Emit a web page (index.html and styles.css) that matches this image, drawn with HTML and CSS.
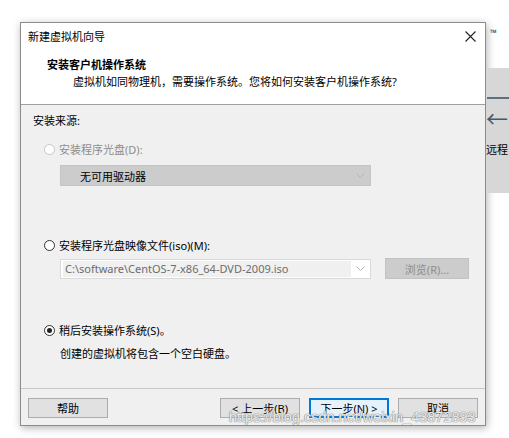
FILE: index.html
```html
<!DOCTYPE html>
<html lang="zh-CN">
<head>
   <meta charset="UTF-8">
   <title>新建虚拟机向导</title>
   <link rel="stylesheet" href="styles.css">
</head>
<body>
   <div class="desk">

      <div class="dialog">
         <div class="head">
            <div class="titlebar">
               <span>新建虚拟机向导</span>
               <svg class="close" width="11" height="11" viewBox="0 0 11 11">
                  <path d="M0.5 0.5 L10.5 10.5 M10.5 0.5 L0.5 10.5" stroke="#222" stroke-width="1.1" fill="none"/>
               </svg>
            </div>
            <p class="head-title">安装客户机操作系统</p>
            <p class="head-sub">虚拟机如同物理机，需要操作系统。您将如何安装客户机操作系统?</p>
         </div>

         <div class="body">
            <p class="label">安装来源:</p>

            <div class="radio-row disabled row-1">
               <span class="radio"></span>
               <span>安装程序光盘(D):</span>
            </div>
            <div class="combo combo-off">
               <span class="combo-text">无可用驱动器</span>
               <svg class="chev" width="9" height="5" viewBox="0 0 9 5"><path d="M0.5 0.5 L4.5 4.5 L8.5 0.5" stroke="#b4b4b4" fill="none"/></svg>
            </div>

            <div class="radio-row row-2">
               <span class="radio"></span>
               <span>安装程序光盘映像文件(iso)(M):</span>
            </div>
            <div class="iso-row">
               <div class="combo combo-iso">
                  <span class="combo-text">C:\software\CentOS-7-x86_64-DVD-2009.iso</span>
                  <svg class="chev" width="9" height="5" viewBox="0 0 9 5"><path d="M0.5 0.5 L4.5 4.5 L8.5 0.5" stroke="#b4b4b4" fill="none"/></svg>
               </div>
               <button class="browse">浏览(R)...</button>
            </div>

            <div class="radio-row row-3">
               <span class="radio checked"></span>
               <span>稍后安装操作系统(S)。</span>
            </div>
            <p class="desc">创建的虚拟机将包含一个空白硬盘。</p>
         </div>

         <div class="foot">
            <button class="btn">帮助</button>
            <div class="foot-right">
               <button class="btn">&lt; 上一步(B)</button>
               <button class="btn btn-main">下一步(N) &gt;</button>
               <button class="btn">取消</button>
            </div>
         </div>
      </div>

      <div class="app">
         <div class="app-top"><span class="tm">™</span></div>
         <div class="app-panel">
            <div class="app-line"></div>
            <div class="app-arrow">←</div>
            <div class="app-text">远程</div>
         </div>
      </div>

      <div class="watermark">https://blog.csdn.net/weixin_43872893</div>
   </div>
</body>
</html>
```

FILE: styles.css
```css
body{
   margin: 0;
   background-color: white;
   font-family: "Noto Sans", "Noto Sans CJK SC", sans-serif;
   font-size: 11px;
   color: #000;
}
p{
   margin: 0;
}

.desk{
   position: relative;
   display: flex;
   width: 509px;
   height: 438px;
   overflow: hidden;
}

.dialog{
   margin-left: 20px;
   margin-top: 22px;
   width: 466px;
   height: 404px;
   box-sizing: border-box;
   border: 1px solid #8c8c8c;
   background-color: #f0f0f0;
   box-shadow: 1px 2px 8px rgba(0, 0, 0, 0.3);
   display: flex;
   flex-direction: column;
   flex-shrink: 0;
}

/* white top part */
.head{
   background-color: white;
   height: 81px;
   border-bottom: 1px solid #a0a0a0;
}
.titlebar{
   height: 26px;
   display: flex;
   align-items: center;
   justify-content: space-between;
   padding: 0 9px 0 7px;
}
.head-title{
   margin-top: 7px;
   padding-left: 26px;
   font-weight: bold;
   line-height: 17px;
}
.head-sub{
   padding-left: 52px;
   line-height: 17px;
}

.body{
   height: 284px;
   padding: 8px 0 0 12px;
   box-sizing: border-box;
   border-bottom: 1px solid #c8c8c8;
}
.label{
   line-height: 16px;
}

.radio-row{
   display: flex;
   align-items: center;
   gap: 4px;
   margin-left: 11px;
   height: 16px;
}
.row-1{ margin-top: 12px; }
.row-2{ margin-top: 51px; }
.row-3{ margin-top: 43px; }
.disabled{
   color: #8d8d8d;
}
.radio{
   width: 11px;
   height: 11px;
   box-sizing: border-box;
   border: 1px solid #333;
   border-radius: 50%;
   background-color: white;
   display: flex;
   align-items: center;
   justify-content: center;
}
.disabled .radio{
   border-color: #c6c6c6;
}
.checked::after{
   content: "";
   width: 5px;
   height: 5px;
   border-radius: 50%;
   background-color: #222;
}

.combo{
   margin-left: 27px;
   width: 311px;
   box-sizing: border-box;
   display: flex;
   align-items: center;
   justify-content: space-between;
   padding-right: 5px;
}
.combo-off{
   margin-top: 8px;
   height: 21px;
   background-color: #cccccc;
   border: 1px solid #c4c4c4;
   padding-left: 19px;
}
.iso-row{
   margin-top: 5px;
   display: flex;
   gap: 14px;
   align-items: center;
}
.combo-iso{
   height: 20px;
   background-color: white;
   border: 1px solid #d9d9d9;
   padding-left: 2px;
}
.combo-iso .combo-text{
   background-color: #f0f0f0;
   color: #6d6d6d;
   width: 288px;
   height: 16px;
   line-height: 16px;
   padding-left: 2px;
   box-sizing: border-box;
}
.browse{
   width: 84px;
   height: 21px;
   background-color: #cccccc;
   border: 1px solid #c2c2c2;
   color: #8d8d8d;
   font: inherit;
   padding: 0;
}

.desc{
   margin-top: 8px;
   margin-left: 27px;
   line-height: 16px;
}

.foot{
   flex: 1;
   display: flex;
   justify-content: space-between;
   padding: 9px 7px 0 7px;
}
.foot-right{
   display: flex;
   gap: 9px;
}
.btn{
   width: 80px;
   height: 20px;
   padding: 0;
   background-color: #e1e1e1;
   border: 1px solid #adadad;
   font: inherit;
   color: #000;
}
.btn-main{
   border: 1px solid #0078d7;
   box-shadow: inset 0 0 0 1px #0078d7;
   background-color: #e5f1fb;
}

/* app behind the dialog */
.app{
   flex: 1;
   display: flex;
   flex-direction: column;
}
.app-top{
   height: 68px;
   padding-top: 24px;
   padding-left: 4px;
   box-sizing: border-box;
}
.tm{
   font-size: 9px;
   font-weight: bold;
   color: #1a3a6a;
}
.app-panel{
   height: 125px;
   background-color: #d7d7d7;
   padding-top: 29px;
   box-sizing: border-box;
}
.app-line{
   height: 2px;
   background-color: #5f7080;
   margin-left: 1px;
}
.app-arrow{
   font-size: 22px;
   line-height: 26px;
   margin-top: 6px;
   color: #4a5866;
}
.app-text{
   font-size: 11px;
   margin-top: 10px;
}

.watermark{
   position: absolute;
   left: 229px;
   top: 409px;
   font-family: "Liberation Sans", sans-serif;
   font-size: 14.5px;
   color: rgba(255, 255, 255, 0.85);
   text-shadow: 0 0 1px #8a8a8a, 0 0 1px #8a8a8a, 0 0 1px #8a8a8a;
   white-space: nowrap;
}
```
